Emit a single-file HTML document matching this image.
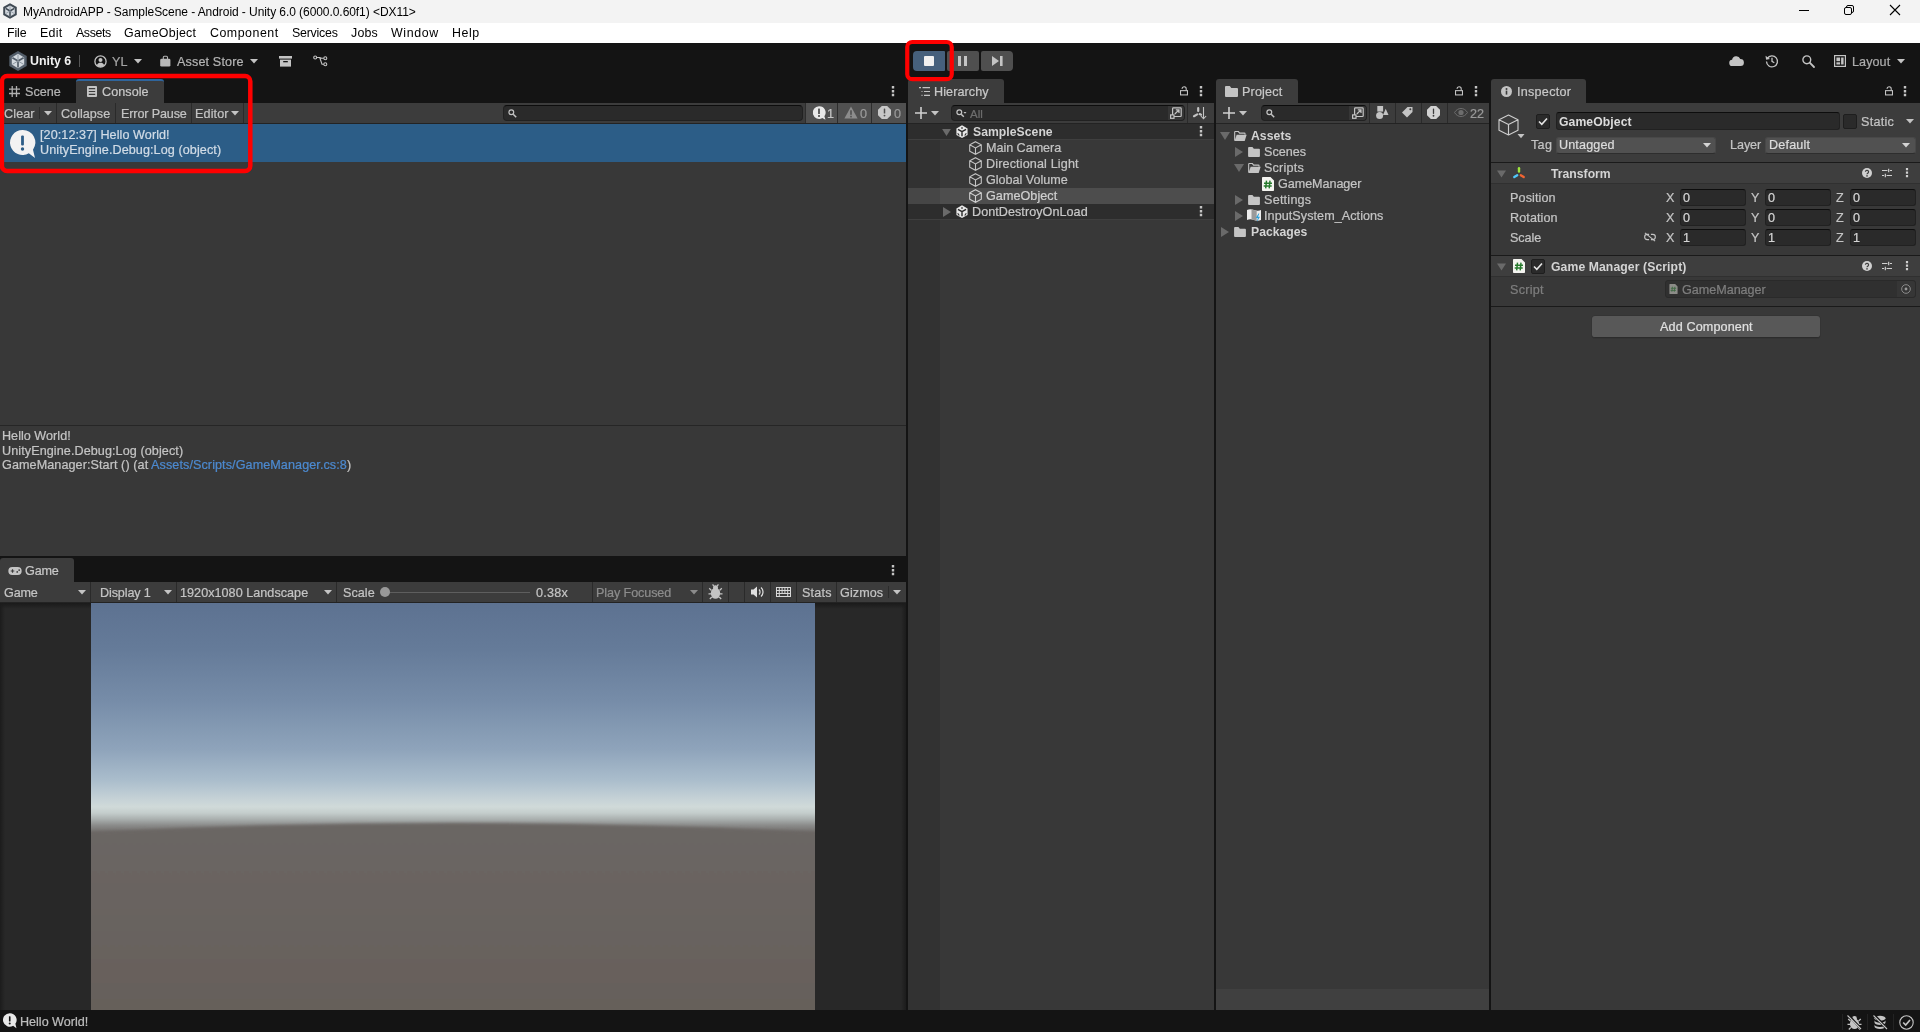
<!DOCTYPE html>
<html lang="en">
<head>
<meta charset="utf-8">
<title>MyAndroidAPP - SampleScene - Android - Unity 6.0</title>
<style>
*{box-sizing:border-box;margin:0;padding:0}
html,body{width:1920px;height:1032px;overflow:hidden;background:#141414}
body{position:relative;font-family:"Liberation Sans",sans-serif;font-size:12.6px;color:#c4c4c4;line-height:16px;-webkit-font-smoothing:antialiased}
.a{position:absolute}
.t{position:absolute;white-space:nowrap;line-height:16px;height:16px;margin-top:1px;-webkit-text-stroke:.22px}
svg{position:absolute;overflow:visible}
/* windows chrome */
#titlebar{left:0;top:0;width:1920px;height:23px;background:#f3f3f3}
#menubar{left:0;top:23px;width:1920px;height:20px;background:#fff}
.mi{color:#000;font-size:12.4px;top:24px;-webkit-text-stroke:0}
/* unity */
#apptb{left:0;top:43px;width:1920px;height:36px;background:#141414}
.panel{background:#383838}
.tb{background:#3c3c3c}
.tab{background:#3c3c3c;border-radius:3px 3px 0 0}
.sep{background:#232323}
.fld{background:#2a2a2a;border:1px solid #212121;border-top-color:#0d0d0d;border-radius:3px}
.dd{background:#515151;border:1px solid #484848;border-bottom-color:#2e2e2e;border-radius:3px}
.btnsep{background:#2a2a2a;width:1px}
.b{font-weight:bold;-webkit-text-stroke:0}
#ttl{-webkit-text-stroke:0}
.dim{color:#8a8a8a}
#ttl{letter-spacing:-0.064px}
#unity6{letter-spacing:-0.016px}
#assetstore{letter-spacing:0.145px}
#scene{letter-spacing:-0.004px}
#consoletab{letter-spacing:0.069px}
#clear{letter-spacing:0.118px}
#collapse{letter-spacing:0.023px}
#errorpause{letter-spacing:-0.137px}
#editor{letter-spacing:0.132px}
#log1{letter-spacing:0.079px}
#log2{letter-spacing:0.089px}
#d1{letter-spacing:0.028px}
#d2{letter-spacing:0.089px}
#d3{letter-spacing:0.085px}
#gametab{letter-spacing:-0.149px}
#g_game{letter-spacing:-0.149px}
#g_disp{letter-spacing:-0.122px}
#g_res{letter-spacing:0.039px}
#g_scale{letter-spacing:0.037px}
#g_zoom{letter-spacing:0.278px}
#g_pf{letter-spacing:-0.093px}
#g_stats{letter-spacing:0.199px}
#g_giz{letter-spacing:0.085px}
#hiertab{letter-spacing:0.090px}
#h_scene{letter-spacing:0.039px}
#h_cam{letter-spacing:-0.036px}
#h_light{letter-spacing:0.140px}
#h_vol{letter-spacing:-0.017px}
#h_go{letter-spacing:0.050px}
#h_ddol{letter-spacing:0.052px}
#projtab{letter-spacing:0.157px}
#p_assets{letter-spacing:0.069px}
#p_scenes{letter-spacing:0.014px}
#p_scripts{letter-spacing:0.214px}
#p_gm{letter-spacing:-0.055px}
#p_settings{letter-spacing:0.236px}
#p_isa{letter-spacing:0.062px}
#p_pkgs{letter-spacing:0.019px}
#p_22{letter-spacing:0.092px}
#insptab{letter-spacing:0.265px}
#i_name{letter-spacing:0.089px}
#i_static{letter-spacing:0.283px}
#i_tag{letter-spacing:0.296px}
#i_untagged{letter-spacing:0.134px}
#i_layer{letter-spacing:-0.063px}
#i_default{letter-spacing:0.185px}
#i_transform{letter-spacing:0.010px}
#i_pos{letter-spacing:0.111px}
#i_rot{letter-spacing:0.097px}
#i_scl{letter-spacing:-0.063px}
#i_gm{letter-spacing:0.097px}
#i_script{letter-spacing:0.249px}
#i_gmref{letter-spacing:-0.027px}
#i_add{letter-spacing:0.128px}
#s_hw{letter-spacing:-0.013px}
#layout{letter-spacing:0.065px}
#m_file{letter-spacing:-0.130px}
#m_edit{letter-spacing:0.273px}
#m_assets{letter-spacing:-0.415px}
#m_gameobject{letter-spacing:0.269px}
#m_component{letter-spacing:0.515px}
#m_services{letter-spacing:-0.227px}
#m_jobs{letter-spacing:0.191px}
#m_window{letter-spacing:0.645px}
#m_help{letter-spacing:0.554px}

</style>
</head>
<body>
<div id="root" style="position:absolute;left:0;top:0;width:1920px;height:1032px;will-change:transform">
<!-- ===== Windows title bar ===== -->
<div class="a" id="titlebar"></div>
<div class="t" style="left:23px;top:3px;color:#000;font-size:12px" id="ttl">MyAndroidAPP - SampleScene - Android - Unity 6.0 (6000.0.60f1) &lt;DX11&gt;</div>
<!-- ===== menu bar ===== -->
<div class="a" id="menubar"></div>
<div class="t mi" id="m_file" style="left:7px">File</div>
<div class="t mi" id="m_edit" style="left:40px">Edit</div>
<div class="t mi" id="m_assets" style="left:76px">Assets</div>
<div class="t mi" id="m_gameobject" style="left:124px">GameObject</div>
<div class="t mi" id="m_component" style="left:210px">Component</div>
<div class="t mi" id="m_services" style="left:292px">Services</div>
<div class="t mi" id="m_jobs" style="left:351px">Jobs</div>
<div class="t mi" id="m_window" style="left:391px">Window</div>
<div class="t mi" id="m_help" style="left:452px">Help</div>
<!-- ===== app toolbar ===== -->
<div class="a" id="apptb"></div>
<!-- TOOLBAR -->
<!-- Unity logo -->
<svg style="left:9px;top:51px" width="18" height="20" viewBox="0 0 18 20"><path d="M9 0 17.700 5v10L9 20 .3 15V5z" fill="#535e6a"/><path d="M9 2.800 15.200 6.400v7.200L9 17.200 2.800 13.600V6.400z" fill="#d2d8de"/><path d="M9 10 3.400 6.700M9 10l5.600-3.300M9 10v6.500" stroke="#535e6a" stroke-width="1.700" fill="none"/><path d="M9 10V3.500M9 10l5.600 3.300M9 10l-5.600 3.300" stroke="#8e98a2" stroke-width="1" fill="none"/></svg>
<div class="t b" style="left:30px;top:52px;color:#f0f0f0;font-size:12.4px" id="unity6">Unity 6</div>
<div class="a" style="left:79px;top:55px;width:1px;height:12px;background:#555"></div>
<!-- account -->
<svg style="left:94px;top:55px" width="13" height="13" viewBox="0 0 13 13"><circle cx="6.500" cy="6.500" r="5.600" fill="none" stroke="#c4c4c4" stroke-width="1.300"/><circle cx="6.500" cy="5" r="2" fill="#c4c4c4"/><path d="M2.800 10.300c.8-2 2.200-2.600 3.700-2.600s2.900.6 3.700 2.600c-1 1.100-2.300 1.700-3.700 1.700s-2.700-.6-3.700-1.700z" fill="#c4c4c4"/></svg>
<div class="t" style="left:112px;top:53px;color:#a4a4a4">YL</div>
<svg style="left:134px;top:59px" width="8" height="5" viewBox="0 0 8 5"><path d="M0 0h8L4 4.500z" fill="#c4c4c4"/></svg>
<!-- asset store -->
<svg style="left:160px;top:55px" width="11" height="12" viewBox="0 0 11 12"><path d="M3.300 4.200V2.300a1.100 1.100 0 0 1 1.100-1.100h2a1.100 1.100 0 0 1 1.100 1.100V4.200" fill="none" stroke="#b4b4b4" stroke-width="1.100"/><rect x=".2" y="3.700" width="10.200" height="7.900" rx="1.400" fill="#b8b8b8"/></svg>
<div class="t" style="left:177px;top:53px;color:#b4b4b4" id="assetstore">Asset Store</div>
<svg style="left:250px;top:59px" width="8" height="5" viewBox="0 0 8 5"><path d="M0 0h8L4 4.500z" fill="#c4c4c4"/></svg>
<!-- package manager -->
<svg style="left:279px;top:56px" width="13" height="11" viewBox="0 0 13 11"><rect x="0" y="0" width="13" height="2.600" fill="#c4c4c4"/><path d="M1 3.600h11v7H1z" fill="#c4c4c4"/><rect x="4.200" y="5" width="4.600" height="1.300" fill="#141414"/></svg>
<!-- version control -->
<svg style="left:313px;top:55px" width="15" height="12" viewBox="0 0 15 12"><g fill="none" stroke="#c4c4c4" stroke-width="1.100"><circle cx="2.200" cy="2.500" r="1.500"/><circle cx="12.300" cy="3.200" r="1.500"/><circle cx="12.300" cy="9.300" r="1.500"/><path d="M3.700 2.500h3l2 .7h2.100M6.700 2.500l2.300 6.800h1.800"/></g></svg>
<!-- play controls -->
<div class="a" style="left:913px;top:51px;width:32px;height:20px;background:#46607c;border-radius:4px 1px 1px 4px"></div>
<div class="a" style="left:924px;top:56px;width:10px;height:10px;background:#f0f0f0;border-radius:1px"></div>
<div class="a" style="left:947px;top:51px;width:32px;height:20px;background:#4f4f4f;border-radius:2px"></div>
<div class="a" style="left:958px;top:56px;width:3px;height:10px;background:#c4c4c4"></div>
<div class="a" style="left:964px;top:56px;width:3px;height:10px;background:#c4c4c4"></div>
<div class="a" style="left:981px;top:51px;width:32px;height:20px;background:#4f4f4f;border-radius:2px 4px 4px 2px"></div>
<svg style="left:992px;top:56px" width="11" height="10" viewBox="0 0 11 10"><path d="M0 0l7 5-7 5z" fill="#c4c4c4"/><rect x="8" y="0" width="2.600" height="10" fill="#c4c4c4"/></svg>
<!-- right icons -->
<svg style="left:1729px;top:56px" width="15" height="10" viewBox="0 0 15 10"><path d="M3.600 10a3.100 3.100 0 0 1-.5-6.200A4.300 4.300 0 0 1 11.300 3a3.500 3.500 0 0 1 .2 7z" fill="#c4c4c4"/></svg>
<svg style="left:1765px;top:54px" width="14" height="14" viewBox="0 0 14 14"><path d="M2.300 4.500A5.500 5.500 0 1 1 1.500 7.500" fill="none" stroke="#c4c4c4" stroke-width="1.300"/><path d="M.5 1.800l.6 4 3.900-.9z" fill="#c4c4c4"/><path d="M7 3.800v3.500l2.300 1.400" fill="none" stroke="#c4c4c4" stroke-width="1.300"/></svg>
<svg style="left:1802px;top:55px" width="13" height="13" viewBox="0 0 13 13"><circle cx="4.800" cy="4.800" r="3.900" fill="none" stroke="#c4c4c4" stroke-width="1.400"/><path d="M7.700 7.700l4.300 4.300" stroke="#c4c4c4" stroke-width="1.800" stroke-linecap="round"/></svg>
<svg style="left:1834px;top:55px" width="12" height="12" viewBox="0 0 12 12"><rect x=".6" y=".6" width="10.800" height="10.800" fill="none" stroke="#c4c4c4" stroke-width="1.200"/><rect x="2.400" y="2.500" width="3.700" height="3.700" fill="#c4c4c4"/><rect x="2.400" y="7.300" width="3.700" height="2.200" fill="#c4c4c4"/><rect x="7.100" y="2.500" width="2.500" height="7" fill="#c4c4c4"/></svg>
<div class="t" style="left:1852px;top:53px;color:#acacac" id="layout">Layout</div>
<svg style="left:1897px;top:59px" width="8" height="5" viewBox="0 0 8 5"><path d="M0 0h8L4 4.500z" fill="#c4c4c4"/></svg>
<!-- window controls -->
<div class="a" style="left:1799px;top:10px;width:10px;height:1px;background:#000"></div>
<svg style="left:1844px;top:5px" width="10" height="10" viewBox="0 0 10 10"><rect x=".5" y="2.500" width="7" height="7" rx="1.500" fill="none" stroke="#000" stroke-width="1"/><path d="M2.500 2.500V2A1.500 1.500 0 0 1 4 .5h4A1.500 1.500 0 0 1 9.500 2v4A1.500 1.500 0 0 1 8 7.500h-.5" fill="none" stroke="#000" stroke-width="1"/></svg>
<svg style="left:1890px;top:5px" width="10" height="10" viewBox="0 0 10 10"><path d="M0 0l10 10M10 0L0 10" stroke="#000" stroke-width="1.100"/></svg>
<!-- title icon -->
<svg style="left:3px;top:3px" width="14" height="16" viewBox="0 0 18 20"><path d="M9 0 17.700 5v10L9 20 .3 15V5z" fill="#3f4953"/><path d="M9 2.800 15.200 6.400v7.200L9 17.200 2.800 13.600V6.400z" fill="#d5dae0"/><path d="M9 10 3.400 6.700M9 10l5.600-3.300M9 10v6.500" stroke="#3f4953" stroke-width="1.900" fill="none"/><path d="M9 10V3.500M9 10l5.600 3.300M9 10l-5.600 3.300" stroke="#8a949e" stroke-width="1" fill="none"/></svg>

<!-- CONSOLE -->
<!-- tab strip -->
<svg style="left:9px;top:86px" width="11" height="11" viewBox="0 0 11 11"><path d="M3.200 0v11M7.500 0v11M0 3.200h11M0 7.500h11" stroke="#b0b0b0" stroke-width="1.300"/></svg>
<div class="t" style="left:25px;top:83px;color:#b4b4b4" id="scene">Scene</div>
<div class="a tab" style="left:76px;top:79px;width:88px;height:24px;border-top:2px solid #2f659c"></div>
<svg style="left:87px;top:86px" width="10" height="11" viewBox="0 0 10 11"><rect x="0" y="0" width="10" height="11" rx="1" fill="#c4c4c4"/><path d="M1.800 2.700h6.400M1.800 5.500h6.400M1.800 8.300h6.400" stroke="#3c3c3c" stroke-width="1.200"/></svg>
<div class="t" style="left:102px;top:83px;color:#c8c8c8" id="consoletab">Console</div>
<svg style="left:891px;top:86px" width="4" height="11" viewBox="0 0 4 11"><path d="M.8 .1h2.400v2.500H.8zM.8 3.900h2.400v2.500H.8zM.8 7.700h2.400v2.500H.8z" fill="#c4c4c4"/></svg>
<!-- console toolbar -->
<div class="a tb" style="left:0;top:103px;width:906px;height:21px;border-bottom:1px solid #232323"></div>
<div class="t" style="left:4px;top:105px" id="clear">Clear</div>
<div class="a btnsep" style="left:39px;top:107px;height:12px;background:#2c2c2c"></div>
<svg style="left:44px;top:111px" width="8" height="5" viewBox="0 0 8 5"><path d="M0 0h8L4 4.500z" fill="#c4c4c4"/></svg>
<div class="a btnsep" style="left:56px;top:103px;height:20px"></div>
<div class="t" style="left:61px;top:105px" id="collapse">Collapse</div>
<div class="a btnsep" style="left:115px;top:103px;height:20px"></div>
<div class="t" style="left:121px;top:105px" id="errorpause">Error Pause</div>
<div class="a btnsep" style="left:191px;top:103px;height:20px"></div>
<div class="t" style="left:195px;top:105px" id="editor">Editor</div>
<svg style="left:231px;top:111px" width="8" height="5" viewBox="0 0 8 5"><path d="M0 0h8L4 4.500z" fill="#c4c4c4"/></svg>
<div class="a btnsep" style="left:243px;top:103px;height:20px"></div>
<!-- search -->
<div class="a fld" style="left:503px;top:105px;width:300px;height:16px;border-radius:4px"></div>
<svg style="left:508px;top:109px" width="9" height="9" viewBox="0 0 9 9"><circle cx="3.300" cy="3.300" r="2.400" fill="none" stroke="#c4c4c4" stroke-width="1.200"/><path d="M5.200 5.200l3 3" stroke="#c4c4c4" stroke-width="1.500"/></svg>
<!-- counters -->
<div class="a" style="left:805px;top:103px;width:101px;height:20px;background:#2d2d2d"></div>
<div class="a" style="left:806px;top:103px;width:31px;height:20px;background:#505050"></div>
<div class="a" style="left:838px;top:103px;width:33px;height:20px;background:#505050"></div>
<div class="a" style="left:872px;top:103px;width:34px;height:20px;background:#505050"></div>
<svg style="left:812px;top:106px" width="14" height="14" viewBox="0 0 14 14"><path d="M7 .3a6.300 6.300 0 1 0 3.300 11.700l3.200 1.700-1.100-3.400A6.300 6.300 0 0 0 7 .3z" fill="#e8e8e8"/><rect x="6.200" y="2.600" width="1.600" height="5.400" rx=".5" fill="#3c3c3c"/><circle cx="7" cy="9.900" r="1" fill="#3c3c3c"/></svg>
<div class="t" style="left:827px;top:105px;color:#c4c4c4">1</div>
<svg style="left:844px;top:106px" width="14" height="13" viewBox="0 0 14 13"><path d="M7 .5 13.600 12.500H.4z" fill="#8c8c8c"/><rect x="6.200" y="4.300" width="1.600" height="4.500" fill="#505050"/><rect x="6.200" y="9.800" width="1.600" height="1.600" fill="#505050"/></svg>
<div class="t" style="left:860px;top:105px;color:#9a9a9a">0</div>
<svg style="left:878px;top:106px" width="13" height="13" viewBox="0 0 14 14"><path d="M4.100 0h5.800L14 4.100v5.800L9.900 14H4.100L0 9.900V4.100z" fill="#c8c8c8"/><rect x="6.200" y="2.600" width="1.600" height="5.600" rx=".5" fill="#505050"/><circle cx="7" cy="10.300" r="1" fill="#505050"/></svg>
<div class="t" style="left:894px;top:105px;color:#9a9a9a">0</div>
<!-- console body -->
<div class="a panel" style="left:0;top:124px;width:906px;height:432px"></div>
<div class="a" style="left:0;top:124px;width:906px;height:38px;background:#2c5d87"></div>
<svg style="left:10px;top:130px" width="26" height="29" viewBox="0 0 26 29"><path d="M12.500 0a12.500 12.500 0 1 0 6.300 23.300l6.200 4.700-2-8.300A12.500 12.500 0 0 0 12.500 0z" fill="#f2f2f2"/><rect x="11.100" y="5.500" width="2.800" height="10" rx="1" fill="#2c5d87"/><circle cx="12.500" cy="19" r="1.700" fill="#2c5d87"/></svg>
<div class="t" style="left:40px;top:126px;color:#d2dce6" id="log1">[20:12:37] Hello World!</div>
<div class="t" style="left:40px;top:141px;color:#d2dce6" id="log2">UnityEngine.Debug:Log (object)</div>
<div class="a" style="left:0;top:425px;width:906px;height:1px;background:#262626"></div>
<div class="t" style="left:2px;top:427px" id="d1">Hello World!</div>
<div class="t" style="left:2px;top:442px" id="d2">UnityEngine.Debug:Log (object)</div>
<div class="t" style="left:2px;top:456px" id="d3">GameManager:Start () (at <span style="color:#4c8ad0">Assets/Scripts/GameManager.cs:8</span>)</div>

<!-- GAME -->
<!-- game tab -->
<div class="a tab" style="left:0;top:558px;width:74px;height:24px"></div>
<svg style="left:8px;top:567px" width="14" height="8" viewBox="0 0 15 9"><rect x="0" y="0" width="15" height="9" rx="4.500" fill="#c4c4c4"/><path d="M2.700 4.500h4M4.700 2.500v4" stroke="#3c3c3c" stroke-width="1.300"/><circle cx="10" cy="5.600" r="1" fill="#3c3c3c"/><circle cx="12.200" cy="3.500" r="1" fill="#3c3c3c"/></svg>
<div class="t" style="left:25px;top:562px;color:#c8c8c8" id="gametab">Game</div>
<svg style="left:891px;top:565px" width="4" height="11" viewBox="0 0 4 11"><path d="M.8 .1h2.400v2.500H.8zM.8 3.900h2.400v2.500H.8zM.8 7.700h2.400v2.500H.8z" fill="#c4c4c4"/></svg>
<!-- game toolbar -->
<div class="a tb" style="left:0;top:582px;width:906px;height:21px;border-bottom:1px solid #232323"></div>
<div class="t" style="left:4px;top:584px" id="g_game">Game</div>
<svg style="left:78px;top:590px" width="8" height="5" viewBox="0 0 8 5"><path d="M0 0h8L4 4.500z" fill="#c4c4c4"/></svg>
<div class="a btnsep" style="left:90px;top:582px;height:20px"></div>
<div class="t" style="left:100px;top:584px" id="g_disp">Display 1</div>
<svg style="left:164px;top:590px" width="8" height="5" viewBox="0 0 8 5"><path d="M0 0h8L4 4.500z" fill="#c4c4c4"/></svg>
<div class="a btnsep" style="left:176px;top:582px;height:20px"></div>
<div class="t" style="left:180px;top:584px" id="g_res">1920x1080 Landscape</div>
<svg style="left:324px;top:590px" width="8" height="5" viewBox="0 0 8 5"><path d="M0 0h8L4 4.500z" fill="#c4c4c4"/></svg>
<div class="a btnsep" style="left:336px;top:582px;height:20px"></div>
<div class="t" style="left:343px;top:584px" id="g_scale">Scale</div>
<div class="a" style="left:385px;top:592px;width:145px;height:1px;background:#5e5e5e"></div>
<div class="a" style="left:380px;top:587px;width:10px;height:10px;border-radius:5px;background:#999"></div>
<div class="t" style="left:536px;top:584px" id="g_zoom">0.38x</div>
<div class="a btnsep" style="left:592px;top:582px;height:20px"></div>
<div class="t dim" style="left:596px;top:584px;color:#8c8c8c" id="g_pf">Play Focused</div>
<svg style="left:690px;top:590px" width="8" height="5" viewBox="0 0 8 5"><path d="M0 0h8L4 4.500z" fill="#8c8c8c"/></svg>
<div class="a btnsep" style="left:702px;top:582px;height:20px"></div>
<svg style="left:708px;top:584px" width="15" height="16" viewBox="0 0 15 16"><ellipse cx="7.500" cy="9.300" rx="4.700" ry="5.500" fill="#c4c4c4"/><circle cx="7.500" cy="3.800" r="2.500" fill="#c4c4c4"/><path d="M3.500 6.500 1.200 4.300M11.500 6.500l2.300-2.200M3 9.800H.5M12 9.800h2.500M3.800 13l-2 2M11.200 13l2 2M5.800 2 4.600 .4M9.200 2 10.400 .4" stroke="#c4c4c4" stroke-width="1.250" fill="none"/></svg>
<div class="a btnsep" style="left:728px;top:582px;height:20px"></div>
<div class="a btnsep" style="left:744px;top:582px;height:20px"></div>
<svg style="left:751px;top:586px" width="13" height="12" viewBox="0 0 13 12"><path d="M0 3.500h2.500L6 .5v11L2.500 8.500H0z" fill="#e0e0e0"/><path d="M8 3.500a3.500 3.500 0 0 1 0 5M10 1.500a6 6 0 0 1 0 9" fill="none" stroke="#e0e0e0" stroke-width="1.200"/></svg>
<div class="a btnsep" style="left:770px;top:582px;height:20px"></div>
<svg style="left:776px;top:587px" width="15" height="10" viewBox="0 0 15 10"><rect x=".5" y=".5" width="14" height="9" fill="none" stroke="#d8d8d8" stroke-width="1"/><path d="M.5 3.500h14M.5 6.500h14M3.300 .5v9M6.100 .5v6M8.900 .5v6M11.700 .5v9" stroke="#d8d8d8" stroke-width="1" fill="none"/></svg>
<div class="a btnsep" style="left:796px;top:582px;height:20px"></div>
<div class="t" style="left:802px;top:584px" id="g_stats">Stats</div>
<div class="a btnsep" style="left:836px;top:582px;height:20px"></div>
<div class="t" style="left:840px;top:584px" id="g_giz">Gizmos</div>
<div class="a btnsep" style="left:888px;top:586px;height:12px;background:#2c2c2c"></div>
<svg style="left:893px;top:590px" width="8" height="5" viewBox="0 0 8 5"><path d="M0 0h8L4 4.500z" fill="#c4c4c4"/></svg>
<!-- game view -->
<div class="a" style="left:0;top:603px;width:906px;height:407px;background:#282828"></div>
<div class="a" style="left:0;top:603px;width:906px;height:6px;background:linear-gradient(to bottom,#1a1a1a,#282828)"></div>
<div class="a" style="left:0;top:603px;width:5px;height:407px;background:linear-gradient(to right,#1c1c1c,rgba(40,40,40,0))"></div>
<div class="a" style="left:901px;top:603px;width:5px;height:407px;background:linear-gradient(to left,#1c1c1c,rgba(40,40,40,0))"></div>
<svg style="left:91px;top:603px" width="724" height="407" viewBox="0 0 724 407">
<defs>
<linearGradient id="sky" x1="0" y1="0" x2="0" y2="1">
<stop offset="0" stop-color="#5d7291"/>
<stop offset=".115" stop-color="#657b99"/>
<stop offset=".238" stop-color="#768ca8"/>
<stop offset=".361" stop-color="#8fa4bb"/>
<stop offset=".435" stop-color="#aabdcc"/>
<stop offset=".484" stop-color="#c7d3d7"/>
<stop offset=".501" stop-color="#d0dad9"/>
<stop offset=".516" stop-color="#c4cdcc"/>
<stop offset=".531" stop-color="#aab0af"/>
<stop offset=".546" stop-color="#8b8c8b"/>
<stop offset=".565" stop-color="#6e6a68"/>
<stop offset=".580" stop-color="#6b6664"/>
<stop offset="1" stop-color="#6b6664"/>
</linearGradient>
<linearGradient id="gnd" x1="0" y1="0" x2="0" y2="1">
<stop offset="0" stop-color="#6b6664"/>
<stop offset="1" stop-color="#655f59"/>
</linearGradient>
<filter id="bl" x="-5%" y="-5%" width="110%" height="110%"><feGaussianBlur stdDeviation="1.600"/></filter>
<clipPath id="gv"><rect x="0" y="0" width="724" height="407"/></clipPath>
</defs>
<rect x="0" y="0" width="724" height="407" fill="url(#sky)"/>
<g clip-path="url(#gv)"><path d="M-10 229.500Q362 210.500 734 229.500V420H-10z" fill="url(#gnd)" filter="url(#bl)"/></g>
</svg>

<!-- HIERARCHY -->
<!-- hierarchy tab -->
<div class="a tab" style="left:908px;top:79px;width:96px;height:24px"></div>
<svg style="left:919px;top:87px" width="11" height="9" viewBox="0 0 11 9"><path d="M0 .6h2M3.500 .6H11M2.500 4.500h1M5 4.500h6M2.500 8.400h1M5 8.400h6" stroke="#c4c4c4" stroke-width="1.200"/></svg>
<div class="t" style="left:934px;top:83px;color:#c8c8c8" id="hiertab">Hierarchy</div>
<svg style="left:1180px;top:86px" width="8" height="10" viewBox="0 0 9 10"><rect x=".6" y="4.600" width="7.800" height="4.800" fill="none" stroke="#c4c4c4" stroke-width="1.200"/><path d="M7 4.500V2.800A2.400 2.400 0 0 0 2.200 2.600" fill="none" stroke="#c4c4c4" stroke-width="1.200"/></svg>
<svg style="left:1199px;top:86px" width="4" height="11" viewBox="0 0 4 11"><path d="M.8 .1h2.400v2.500H.8zM.8 3.900h2.400v2.500H.8zM.8 7.700h2.400v2.500H.8z" fill="#c4c4c4"/></svg>
<!-- toolbar -->
<div class="a tb" style="left:908px;top:103px;width:306px;height:21px;border-bottom:1px solid #232323"></div>
<svg style="left:915px;top:107px" width="12" height="12" viewBox="0 0 12 12"><path d="M6 0v12M0 6h12" stroke="#d0d0d0" stroke-width="1.600"/></svg>
<svg style="left:931px;top:111px" width="8" height="5" viewBox="0 0 8 5"><path d="M0 0h8L4 4.500z" fill="#c4c4c4"/></svg>
<div class="a fld" style="left:951px;top:105px;width:234px;height:16px;border-radius:4px"></div>
<svg style="left:956px;top:109px" width="11" height="9" viewBox="0 0 11 9"><circle cx="3.300" cy="3.300" r="2.400" fill="none" stroke="#c4c4c4" stroke-width="1.200"/><path d="M5.200 5.200l2.600 2.600" stroke="#c4c4c4" stroke-width="1.500"/><path d="M7.500 3h3l-1.500 1.800z" fill="#c4c4c4"/></svg>
<div class="t" style="left:970px;top:105px;color:#6e6e6e;font-size:11.500px">All</div>
<div class="a" style="left:1168px;top:106px;width:16px;height:14px;background:#363636;border-radius:0 3px 3px 0"></div>
<svg style="left:1170px;top:107px" width="12" height="12" viewBox="0 0 12 12"><rect x="2.600" y=".9" width="8.600" height="8.600" rx=".8" fill="none" stroke="#c4c4c4" stroke-width="1.200"/><rect x=".6" y="7.900" width="3.400" height="3.400" fill="#363636" stroke="#c4c4c4" stroke-width="1.200"/><path d="M4.800 7 9 2.800M5.800 2.800H9V6" fill="none" stroke="#c4c4c4" stroke-width="1.200"/></svg>
<div class="a btnsep" style="left:1187px;top:103px;height:20px"></div>
<svg style="left:1192px;top:106px" width="15" height="14" viewBox="0 0 15 14"><path d="M6.200 2.200V5M2 10.200 5.200 8.400M7.700 8.100 9 8.700" fill="none" stroke="#c4c4c4" stroke-width="2.200" stroke-linecap="round"/><path d="M11.500 1V12.600M8.900 10l2.600 2.800L14.100 10" fill="none" stroke="#c4c4c4" stroke-width="1.100"/></svg>
<!-- body -->
<div class="a panel" style="left:908px;top:124px;width:306px;height:886px"></div>
<div class="a" style="left:908px;top:124px;width:32px;height:886px;background:#323232"></div>
<div class="a" style="left:908px;top:124px;width:306px;height:16px;background:#2d2d2d"></div>
<div class="a" style="left:908px;top:188px;width:306px;height:16px;background:#4d4d4d"></div>
<div class="a" style="left:908px;top:188px;width:32px;height:16px;background:#464646"></div>
<div class="a" style="left:908px;top:204px;width:306px;height:16px;background:#2d2d2d"></div>
<div class="a" style="left:908px;top:139px;width:306px;height:1px;background:#3f3f3f"></div>
<div class="a" style="left:908px;top:219px;width:306px;height:1px;background:#3f3f3f"></div>
<!-- rows -->
<svg style="left:942px;top:129px" width="9" height="7" viewBox="0 0 10 8"><path d="M0 0h10L5 8z" fill="#6a6a6a"/></svg>
<svg style="left:956px;top:125px" width="12" height="13" viewBox="0 0 14 15"><path d="M7 .3 13.500 4v7.500L7 15 .5 11.500V4z" fill="#e8e8e8"/><path d="M7 7.600 2.300 4.900M7 7.600l4.700-2.700M7 7.600V13" stroke="#2d2d2d" stroke-width="1.700" fill="none"/><path d="M7 2.200v2.300M3.800 12.200 2 9.500M10.200 12.200 12 9.500" stroke="#2d2d2d" stroke-width="1.300"/></svg>
<div class="t b" style="left:973px;top:123px;color:#d4d4d4;font-size:12.200px" id="h_scene">SampleScene</div>
<svg style="left:1199px;top:126px" width="4" height="11" viewBox="0 0 4 11"><path d="M.8 .1h2.400v2.500H.8zM.8 3.900h2.400v2.500H.8zM.8 7.700h2.400v2.500H.8z" fill="#c4c4c4"/></svg>
<svg style="left:969px;top:141px" width="13" height="14" viewBox="0 0 13 14"><path d="M6.500 .7 12.300 3.800v6.400L6.500 13.300.7 10.200V3.800zM.7 3.800l5.800 3.100 5.800-3.100M6.500 6.900v6.400" fill="none" stroke="#c4c4c4" stroke-width="1.100"/></svg>
<div class="t" style="left:986px;top:139px" id="h_cam">Main Camera</div>
<svg style="left:969px;top:157px" width="13" height="14" viewBox="0 0 13 14"><path d="M6.500 .7 12.300 3.800v6.400L6.500 13.300.7 10.200V3.800zM.7 3.800l5.800 3.100 5.800-3.100M6.500 6.900v6.400" fill="none" stroke="#c4c4c4" stroke-width="1.100"/></svg>
<div class="t" style="left:986px;top:155px" id="h_light">Directional Light</div>
<svg style="left:969px;top:173px" width="13" height="14" viewBox="0 0 13 14"><path d="M6.500 .7 12.300 3.800v6.400L6.500 13.300.7 10.200V3.800zM.7 3.800l5.800 3.100 5.800-3.100M6.500 6.900v6.400" fill="none" stroke="#c4c4c4" stroke-width="1.100"/></svg>
<div class="t" style="left:986px;top:171px" id="h_vol">Global Volume</div>
<svg style="left:969px;top:189px" width="13" height="14" viewBox="0 0 13 14"><path d="M6.500 .7 12.300 3.800v6.400L6.500 13.300.7 10.200V3.800zM.7 3.800l5.800 3.100 5.800-3.100M6.500 6.900v6.400" fill="none" stroke="#d0d0d0" stroke-width="1.100"/></svg>
<div class="t" style="left:986px;top:187px;color:#d0d0d0" id="h_go">GameObject</div>
<svg style="left:943px;top:207px" width="8" height="10" viewBox="0 0 8 10"><path d="M0 0v10l8-5z" fill="#6a6a6a"/></svg>
<svg style="left:956px;top:205px" width="12" height="13" viewBox="0 0 14 15"><path d="M7 .3 13.500 4v7.500L7 15 .5 11.500V4z" fill="#e8e8e8"/><path d="M7 7.600 2.300 4.900M7 7.600l4.700-2.700M7 7.600V13" stroke="#2d2d2d" stroke-width="1.700" fill="none"/><path d="M7 2.200v2.300M3.800 12.200 2 9.500M10.200 12.200 12 9.500" stroke="#2d2d2d" stroke-width="1.300"/></svg>
<div class="t" style="left:972px;top:203px;color:#c8c8c8" id="h_ddol">DontDestroyOnLoad</div>
<svg style="left:1199px;top:206px" width="4" height="11" viewBox="0 0 4 11"><path d="M.8 .1h2.400v2.500H.8zM.8 3.900h2.400v2.500H.8zM.8 7.700h2.400v2.500H.8z" fill="#c4c4c4"/></svg>

<!-- PROJECT -->
<!-- project tab -->
<div class="a tab" style="left:1216px;top:79px;width:82px;height:24px"></div>
<svg style="left:1225px;top:86px" width="13" height="11" viewBox="0 0 13 11"><path d="M0 1a1 1 0 0 1 1-1h3.800l1.500 2H12a1 1 0 0 1 1 1v7a1 1 0 0 1-1 1H1a1 1 0 0 1-1-1z" fill="#c4c4c4"/></svg>
<div class="t" style="left:1242px;top:83px;color:#c8c8c8" id="projtab">Project</div>
<svg style="left:1455px;top:86px" width="8" height="10" viewBox="0 0 9 10"><rect x=".6" y="4.600" width="7.800" height="4.800" fill="none" stroke="#c4c4c4" stroke-width="1.200"/><path d="M7 4.500V2.800A2.400 2.400 0 0 0 2.200 2.600" fill="none" stroke="#c4c4c4" stroke-width="1.200"/></svg>
<svg style="left:1474px;top:86px" width="4" height="11" viewBox="0 0 4 11"><path d="M.8 .1h2.400v2.500H.8zM.8 3.900h2.400v2.500H.8zM.8 7.700h2.400v2.500H.8z" fill="#c4c4c4"/></svg>
<!-- toolbar -->
<div class="a tb" style="left:1216px;top:103px;width:273px;height:21px;border-bottom:1px solid #232323"></div>
<svg style="left:1223px;top:107px" width="12" height="12" viewBox="0 0 12 12"><path d="M6 0v12M0 6h12" stroke="#d0d0d0" stroke-width="1.600"/></svg>
<svg style="left:1239px;top:111px" width="8" height="5" viewBox="0 0 8 5"><path d="M0 0h8L4 4.500z" fill="#c4c4c4"/></svg>
<div class="a fld" style="left:1261px;top:105px;width:106px;height:16px;border-radius:4px"></div>
<svg style="left:1266px;top:109px" width="9" height="9" viewBox="0 0 9 9"><circle cx="3.300" cy="3.300" r="2.400" fill="none" stroke="#c4c4c4" stroke-width="1.200"/><path d="M5.200 5.200l3 3" stroke="#c4c4c4" stroke-width="1.500"/></svg>
<div class="a" style="left:1349px;top:106px;width:17px;height:14px;background:#363636;border-radius:0 3px 3px 0"></div>
<svg style="left:1352px;top:107px" width="12" height="12" viewBox="0 0 12 12"><rect x="2.600" y=".9" width="8.600" height="8.600" rx=".8" fill="none" stroke="#c4c4c4" stroke-width="1.200"/><rect x=".6" y="7.900" width="3.400" height="3.400" fill="#363636" stroke="#c4c4c4" stroke-width="1.200"/><path d="M4.800 7 9 2.800M5.800 2.800H9V6" fill="none" stroke="#c4c4c4" stroke-width="1.200"/></svg>
<div class="a btnsep" style="left:1369px;top:103px;height:20px"></div>
<svg style="left:1376px;top:106px" width="13" height="13" viewBox="0 0 13 13"><rect x="1.300" y="0" width="5.800" height="5.600" fill="#c4c4c4"/><circle cx="3.600" cy="9.500" r="3.500" fill="#c4c4c4"/><path d="M9.700 2.700 12.500 9H7z" fill="#c4c4c4"/></svg>
<div class="a btnsep" style="left:1395px;top:103px;height:20px"></div>
<svg style="left:1402px;top:107px" width="11" height="11" viewBox="0 0 11 11"><path d="M5.500 0H10.500V5L5 10.500 0 5.500z" fill="#c4c4c4"/><circle cx="8.300" cy="2.300" r="1" fill="#3c3c3c"/></svg>
<div class="a btnsep" style="left:1421px;top:103px;height:20px"></div>
<svg style="left:1427px;top:106px" width="13" height="13" viewBox="0 0 14 14"><path d="M4.100 0h5.800L14 4.100v5.800L9.900 14H4.100L0 9.900V4.100z" fill="#d2d2d2"/><rect x="6.300" y="2.700" width="1.400" height="5.800" rx=".5" fill="#3c3c3c"/><circle cx="7" cy="10.500" r=".95" fill="#3c3c3c"/></svg>
<div class="a btnsep" style="left:1447px;top:103px;height:20px"></div>
<svg style="left:1454px;top:108px" width="14" height="9" viewBox="0 0 14 9"><path d="M.5 4.500C2.500 1.500 4.500.5 7 .5s4.500 1 6.500 4C11.500 7.500 9.500 8.500 7 8.500s-4.500-1-6.500-4z" fill="none" stroke="#6e6e6e" stroke-width="1"/><circle cx="7" cy="4.500" r="2.600" fill="#6e6e6e"/></svg>
<div class="t" style="left:1470px;top:105px;color:#9a9a9a;font-size:12.600px" id="p_22">22</div>
<!-- body -->
<div class="a panel" style="left:1216px;top:124px;width:273px;height:886px"></div>
<div class="a" style="left:1216px;top:989px;width:273px;height:21px;background:#404040"></div>
<!-- rows -->
<svg style="left:1220px;top:132px" width="10" height="8" viewBox="0 0 10 8"><path d="M0 0h10L5 8z" fill="#6a6a6a"/></svg>
<svg style="left:1234px;top:131px" width="13" height="10" viewBox="0 0 14 11"><path d="M.6 10.400V1.300a.7 .7 0 0 1 .7-.7h3.400l1.300 1.700h5.300a.7 .7 0 0 1 .7 .7v1.200" fill="none" stroke="#c4c4c4" stroke-width="1.200"/><path d="M2.800 4.200h11L11.600 11H.4z" fill="#c4c4c4"/></svg>
<div class="t b" style="left:1251px;top:127px;color:#d4d4d4;font-size:12.200px" id="p_assets">Assets</div>
<svg style="left:1235px;top:147px" width="8" height="10" viewBox="0 0 8 10"><path d="M0 0v10l8-5z" fill="#6a6a6a"/></svg>
<svg style="left:1248px;top:147px" width="12" height="10" viewBox="0 0 13 11"><path d="M0 1a1 1 0 0 1 1-1h3.800l1.500 2H12a1 1 0 0 1 1 1v7a1 1 0 0 1-1 1H1a1 1 0 0 1-1-1z" fill="#c4c4c4"/></svg>
<div class="t" style="left:1264px;top:143px" id="p_scenes">Scenes</div>
<svg style="left:1234px;top:164px" width="10" height="8" viewBox="0 0 10 8"><path d="M0 0h10L5 8z" fill="#6a6a6a"/></svg>
<svg style="left:1248px;top:163px" width="13" height="10" viewBox="0 0 14 11"><path d="M.6 10.400V1.300a.7 .7 0 0 1 .7-.7h3.400l1.300 1.700h5.300a.7 .7 0 0 1 .7 .7v1.200" fill="none" stroke="#c4c4c4" stroke-width="1.200"/><path d="M2.800 4.200h11L11.600 11H.4z" fill="#c4c4c4"/></svg>
<div class="t" style="left:1264px;top:159px" id="p_scripts">Scripts</div>
<svg style="left:1262px;top:177px" width="12" height="14" viewBox="0 0 12 14"><path d="M0 .8A.8 .8 0 0 1 .8 0H8.500L12 3.500V13.200a.8 .8 0 0 1-.8 .8H.8a.8 .8 0 0 1-.8-.8z" fill="#f4f4f0"/><path d="M4.500 3.600 3.700 11.400M8 3.600 7.200 11.400M2 6.200h8M1.700 9h8" stroke="#267a2c" stroke-width="1.450" fill="none"/></svg>
<div class="t" style="left:1278px;top:175px" id="p_gm">GameManager</div>
<svg style="left:1235px;top:195px" width="8" height="10" viewBox="0 0 8 10"><path d="M0 0v10l8-5z" fill="#6a6a6a"/></svg>
<svg style="left:1248px;top:195px" width="12" height="10" viewBox="0 0 13 11"><path d="M0 1a1 1 0 0 1 1-1h3.800l1.500 2H12a1 1 0 0 1 1 1v7a1 1 0 0 1-1 1H1a1 1 0 0 1-1-1z" fill="#c4c4c4"/></svg>
<div class="t" style="left:1264px;top:191px" id="p_settings">Settings</div>
<svg style="left:1235px;top:211px" width="8" height="10" viewBox="0 0 8 10"><path d="M0 0v10l8-5z" fill="#6a6a6a"/></svg>
<svg style="left:1247px;top:209px" width="14" height="13" viewBox="0 0 14 13"><path d="M0 1C2 0 4.500 0 7 1s5 1 7 0v10c-2 1-4.500 1-7 0s-5-1-7 0z" fill="#ececec"/><path d="M4.500 .4C5.500 .5 6.200 .7 7 1s1.700 .6 2.700 .7v10C8.700 11.600 7.800 11.300 7 11s-1.500-.5-2.500-.6z" fill="#9a9a9a"/><path d="M11.500 4.500 8.800 9h2l-1 4 3.200-5.200h-2l1.300-3.300z" fill="#2a9fd8"/></svg>
<div class="t" style="left:1264px;top:207px" id="p_isa">InputSystem_Actions</div>
<svg style="left:1221px;top:227px" width="8" height="10" viewBox="0 0 8 10"><path d="M0 0v10l8-5z" fill="#6a6a6a"/></svg>
<svg style="left:1234px;top:227px" width="12" height="10" viewBox="0 0 13 11"><path d="M0 1a1 1 0 0 1 1-1h3.800l1.500 2H12a1 1 0 0 1 1 1v7a1 1 0 0 1-1 1H1a1 1 0 0 1-1-1z" fill="#c4c4c4"/></svg>
<div class="t b" style="left:1251px;top:223px;color:#d4d4d4;font-size:12.200px" id="p_pkgs">Packages</div>

<!-- INSPECTOR -->
<!-- inspector tab -->
<div class="a tab" style="left:1491px;top:79px;width:95px;height:24px"></div>
<svg style="left:1501px;top:86px" width="11" height="11" viewBox="0 0 11 11"><circle cx="5.500" cy="5.500" r="5.500" fill="#c4c4c4"/><rect x="4.700" y="4.600" width="1.600" height="4" fill="#3c3c3c"/><circle cx="5.500" cy="2.900" r="1" fill="#3c3c3c"/></svg>
<div class="t" style="left:1517px;top:83px;color:#c8c8c8" id="insptab">Inspector</div>
<svg style="left:1885px;top:86px" width="8" height="10" viewBox="0 0 9 10"><rect x=".6" y="4.600" width="7.800" height="4.800" fill="none" stroke="#c4c4c4" stroke-width="1.200"/><path d="M7 4.500V2.800A2.400 2.400 0 0 0 2.200 2.600" fill="none" stroke="#c4c4c4" stroke-width="1.200"/></svg>
<svg style="left:1903px;top:86px" width="4" height="11" viewBox="0 0 4 11"><path d="M.8 .1h2.400v2.500H.8zM.8 3.900h2.400v2.500H.8zM.8 7.700h2.400v2.500H.8z" fill="#c4c4c4"/></svg>
<!-- body -->
<div class="a" style="left:1491px;top:103px;width:429px;height:60px;background:#3c3c3c"></div>
<div class="a panel" style="left:1491px;top:163px;width:429px;height:847px"></div>
<!-- header -->
<svg style="left:1498px;top:114px" width="21" height="22" viewBox="0 0 21 22"><path d="M10.500 1 20 5.800v10.400L10.500 21 1 16.200V5.800zM1 5.800l9.500 4.800L20 5.800M10.500 10.600V21" fill="none" stroke="#cdcdcd" stroke-width="1.150" stroke-linejoin="round"/></svg>
<svg style="left:1517px;top:134px" width="8" height="5" viewBox="0 0 8 5"><path d="M.5 0h7L4 4.200z" fill="#c4c4c4"/></svg>
<div class="a" style="left:1536px;top:114px;width:14px;height:15px;background:#2a2a2a;border:1px solid #1e1e1e;border-radius:2px"></div>
<svg style="left:1538px;top:117px" width="10" height="9" viewBox="0 0 10 9"><path d="M1 4.500 3.800 7.300 9 1.500" fill="none" stroke="#e4e4e4" stroke-width="1.600"/></svg>
<div class="a fld" style="left:1556px;top:112px;width:284px;height:18px"></div>
<div class="t b" style="left:1559px;top:113px;color:#dcdcdc;font-size:12.200px" id="i_name">GameObject</div>
<div class="a" style="left:1843px;top:114px;width:14px;height:15px;background:#2a2a2a;border:1px solid #1e1e1e;border-radius:2px"></div>
<div class="t" style="left:1861px;top:113px" id="i_static">Static</div>
<svg style="left:1906px;top:119px" width="8" height="5" viewBox="0 0 8 5"><path d="M0 0h8L4 4.500z" fill="#c4c4c4"/></svg>
<div class="t" style="left:1531px;top:136px" id="i_tag">Tag</div>
<div class="a dd" style="left:1556px;top:137px;width:160px;height:17px"></div>
<div class="t" style="left:1559px;top:136px;color:#dcdcdc" id="i_untagged">Untagged</div>
<svg style="left:1703px;top:143px" width="8" height="5" viewBox="0 0 8 5"><path d="M0 0h8L4 4.500z" fill="#d4d4d4"/></svg>
<div class="t" style="left:1730px;top:136px" id="i_layer">Layer</div>
<div class="a dd" style="left:1765px;top:137px;width:151px;height:17px"></div>
<div class="t" style="left:1769px;top:136px;color:#dcdcdc" id="i_default">Default</div>
<svg style="left:1902px;top:143px" width="8" height="5" viewBox="0 0 8 5"><path d="M0 0h8L4 4.500z" fill="#d4d4d4"/></svg>
<!-- transform header -->
<div class="a" style="left:1491px;top:162px;width:429px;height:1px;background:#1a1a1a"></div>
<div class="a" style="left:1491px;top:163px;width:429px;height:20px;background:#3e3e3e"></div>
<div class="a" style="left:1491px;top:183px;width:429px;height:1px;background:#303030"></div>
<svg style="left:1497px;top:170px" width="9" height="8" viewBox="0 0 10 8"><path d="M0 0h10L5 8z" fill="#6a6a6a"/></svg>
<svg style="left:1512px;top:166px" width="14" height="13" viewBox="0 0 14 13"><path d="M7 2.300V5.600" stroke="#9fe63c" stroke-width="2.400" stroke-linecap="round"/><path d="M5.200 9.200 2.300 11" stroke="#50c8fa" stroke-width="2.400" stroke-linecap="round"/><path d="M8.800 9.200 11.700 11" stroke="#f06432" stroke-width="2.400" stroke-linecap="round"/></svg>
<div class="t b" style="left:1551px;top:165px;color:#d4d4d4;font-size:12.200px" id="i_transform">Transform</div>
<svg style="left:1862px;top:168px" width="10" height="10" viewBox="0 0 11 11"><circle cx="5.500" cy="5.500" r="5.500" fill="#d0d0d0"/><path d="M3.800 4.200a1.700 1.700 0 1 1 2.600 1.500c-.6 .4-.9 .7-.9 1.300" fill="none" stroke="#3e3e3e" stroke-width="1.400"/><circle cx="5.500" cy="8.700" r=".9" fill="#3e3e3e"/></svg>
<svg style="left:1882px;top:168px" width="10" height="10" viewBox="0 0 12 11"><path d="M0 2.500h6.500M9.500 2.500H12M8 .5v4M0 8.500h2.500M5.500 8.500H12M4 6.500v4" fill="none" stroke="#d0d0d0" stroke-width="1.400"/></svg>
<svg style="left:1905px;top:168px" width="4" height="10" viewBox="0 0 4 11"><path d="M.8 .1h2.400v2.500H.8zM.8 3.900h2.400v2.500H.8zM.8 7.700h2.400v2.500H.8z" fill="#d0d0d0"/></svg>
<!-- transform rows -->
<div class="t" style="left:1510px;top:189px" id="i_pos">Position</div>
<div class="t" style="left:1666px;top:189px">X</div><div class="a fld" style="left:1680px;top:189px;width:66px;height:17px"></div><div class="t" style="left:1683px;top:189px;color:#d4d4d4">0</div>
<div class="t" style="left:1751px;top:189px">Y</div><div class="a fld" style="left:1765px;top:189px;width:66px;height:17px"></div><div class="t" style="left:1768px;top:189px;color:#d4d4d4">0</div>
<div class="t" style="left:1836px;top:189px">Z</div><div class="a fld" style="left:1850px;top:189px;width:66px;height:17px"></div><div class="t" style="left:1853px;top:189px;color:#d4d4d4">0</div>
<div class="t" style="left:1510px;top:209px" id="i_rot">Rotation</div>
<div class="t" style="left:1666px;top:209px">X</div><div class="a fld" style="left:1680px;top:209px;width:66px;height:17px"></div><div class="t" style="left:1683px;top:209px;color:#d4d4d4">0</div>
<div class="t" style="left:1751px;top:209px">Y</div><div class="a fld" style="left:1765px;top:209px;width:66px;height:17px"></div><div class="t" style="left:1768px;top:209px;color:#d4d4d4">0</div>
<div class="t" style="left:1836px;top:209px">Z</div><div class="a fld" style="left:1850px;top:209px;width:66px;height:17px"></div><div class="t" style="left:1853px;top:209px;color:#d4d4d4">0</div>
<div class="t" style="left:1510px;top:229px" id="i_scl">Scale</div>
<svg style="left:1644px;top:232px" width="12" height="10" viewBox="0 0 13 10"><path d="M5.500 2.200H3.500a2.800 2.800 0 0 0 0 5.600h2M7.500 2.200h2a2.800 2.800 0 0 1 0 5.600h-2" fill="none" stroke="#c4c4c4" stroke-width="1.200"/><path d="M1 .5 12 9.500" stroke="#c4c4c4" stroke-width="1.200"/></svg>
<div class="t" style="left:1666px;top:229px">X</div><div class="a fld" style="left:1680px;top:229px;width:66px;height:17px"></div><div class="t" style="left:1683px;top:229px;color:#d4d4d4">1</div>
<div class="t" style="left:1751px;top:229px">Y</div><div class="a fld" style="left:1765px;top:229px;width:66px;height:17px"></div><div class="t" style="left:1768px;top:229px;color:#d4d4d4">1</div>
<div class="t" style="left:1836px;top:229px">Z</div><div class="a fld" style="left:1850px;top:229px;width:66px;height:17px"></div><div class="t" style="left:1853px;top:229px;color:#d4d4d4">1</div>
<!-- game manager header -->
<div class="a" style="left:1491px;top:255px;width:429px;height:1px;background:#1a1a1a"></div>
<div class="a" style="left:1491px;top:256px;width:429px;height:20px;background:#3e3e3e"></div>
<div class="a" style="left:1491px;top:276px;width:429px;height:1px;background:#303030"></div>
<svg style="left:1497px;top:263px" width="9" height="8" viewBox="0 0 10 8"><path d="M0 0h10L5 8z" fill="#6a6a6a"/></svg>
<svg style="left:1513px;top:259px" width="12" height="14" viewBox="0 0 12 14"><path d="M0 .8A.8 .8 0 0 1 .8 0H8.500L12 3.500V13.200a.8 .8 0 0 1-.8 .8H.8a.8 .8 0 0 1-.8-.8z" fill="#f4f4f0"/><path d="M4.500 3.600 3.700 11.400M8 3.600 7.200 11.400M2 6.200h8M1.700 9h8" stroke="#267a2c" stroke-width="1.450" fill="none"/></svg>
<div class="a" style="left:1531px;top:259px;width:14px;height:15px;background:#2a2a2a;border:1px solid #1e1e1e;border-radius:2px"></div>
<svg style="left:1533px;top:262px" width="10" height="9" viewBox="0 0 10 9"><path d="M1 4.500 3.800 7.300 9 1.500" fill="none" stroke="#e4e4e4" stroke-width="1.600"/></svg>
<div class="t b" style="left:1551px;top:258px;color:#d4d4d4;font-size:12.200px" id="i_gm">Game Manager (Script)</div>
<svg style="left:1862px;top:261px" width="10" height="10" viewBox="0 0 11 11"><circle cx="5.500" cy="5.500" r="5.500" fill="#d0d0d0"/><path d="M3.800 4.200a1.700 1.700 0 1 1 2.600 1.500c-.6 .4-.9 .7-.9 1.300" fill="none" stroke="#3e3e3e" stroke-width="1.400"/><circle cx="5.500" cy="8.700" r=".9" fill="#3e3e3e"/></svg>
<svg style="left:1882px;top:261px" width="10" height="10" viewBox="0 0 12 11"><path d="M0 2.500h6.500M9.500 2.500H12M8 .5v4M0 8.500h2.500M5.500 8.500H12M4 6.500v4" fill="none" stroke="#d0d0d0" stroke-width="1.400"/></svg>
<svg style="left:1905px;top:261px" width="4" height="10" viewBox="0 0 4 11"><path d="M.8 .1h2.400v2.500H.8zM.8 3.900h2.400v2.500H.8zM.8 7.700h2.400v2.500H.8z" fill="#d0d0d0"/></svg>
<!-- script row -->
<div class="t" style="left:1510px;top:281px;color:#7e7e7e" id="i_script">Script</div>
<div class="a" style="left:1665px;top:280px;width:251px;height:18px;background:#303030;border:1px solid #2a2a2a;border-radius:3px"></div>
<svg style="left:1669px;top:284px" width="9" height="10" viewBox="0 0 9 11"><path d="M0 .6A.6 .6 0 0 1 .6 0H6.300L9 2.700v7.700a.6 .6 0 0 1-.6 .6H.6a.6 .6 0 0 1-.6-.6z" fill="#8c8c88"/><path d="M3.300 3 2.700 8.500M6 3 5.400 8.500M1.600 4.700h5.800M1.300 7h5.800" stroke="#3f6a42" stroke-width="1" fill="none"/></svg>
<div class="t" style="left:1682px;top:281px;color:#7e7e7e" id="i_gmref">GameManager</div>
<div class="a" style="left:1897px;top:281px;width:18px;height:16px;background:#363636;border-radius:0 3px 3px 0"></div>
<svg style="left:1901px;top:284px" width="10" height="10" viewBox="0 0 12 12"><circle cx="6" cy="6" r="5.200" fill="none" stroke="#9a9a9a" stroke-width="1"/><circle cx="6" cy="6" r="1.700" fill="#9a9a9a"/></svg>
<div class="a" style="left:1491px;top:306px;width:429px;height:1px;background:#1a1a1a"></div>
<!-- add component -->
<div class="a" style="left:1592px;top:316px;width:228px;height:22px;background:#585858;border-bottom:1px solid #2c2c2c;border-radius:3px;box-shadow:0 0 0 .5px #303030"></div>
<div class="t" style="left:1660px;top:318px;color:#e0e0e0" id="i_add">Add Component</div>

<!-- STATUS -->
<svg style="left:3px;top:1013px" width="14" height="16" viewBox="0 0 26 29"><path d="M12.500 0a12.500 12.500 0 1 0 6.300 23.300l6.200 4.700-2-8.300A12.500 12.500 0 0 0 12.500 0z" fill="#e8e8e8"/><rect x="11" y="5.500" width="3" height="10" rx="1" fill="#141414"/><circle cx="12.500" cy="19" r="1.900" fill="#141414"/></svg>
<div class="t" style="left:20px;top:1013px;color:#bdbdbd" id="s_hw">Hello World!</div>
<div class="a" style="left:1842px;top:1014px;width:1px;height:16px;background:#232323"></div>
<div class="a" style="left:1867px;top:1014px;width:1px;height:16px;background:#232323"></div>
<div class="a" style="left:1893px;top:1014px;width:1px;height:16px;background:#232323"></div>
<svg style="left:1847px;top:1015px" width="15" height="15" viewBox="0 0 15 15"><ellipse cx="7.500" cy="8.800" rx="4.600" ry="5.200" fill="#c4c4c4"/><circle cx="7.500" cy="3.500" r="2.400" fill="#c4c4c4"/><path d="M3.500 6 1.200 4M11.500 6l2.300-2M3 9.300H.5M12 9.300h2.500M3.800 12.500l-2 2M11.200 12.500l2 2" stroke="#c4c4c4" stroke-width="1.250"/><path d="M1.300 0 14.800 14.500" stroke="#141414" stroke-width="2.400"/><path d="M.5 .5 14 14" stroke="#c4c4c4" stroke-width="1.100"/></svg>
<svg style="left:1873px;top:1015px" width="15" height="15" viewBox="0 0 15 15"><ellipse cx="7" cy="3.200" rx="5.500" ry="2.500" fill="#c4c4c4"/><path d="M1.500 5.200c0 1.400 2.500 2.500 5.500 2.500s5.500-1.100 5.500-2.500v2.400c0 1.400-2.500 2.500-5.500 2.500S1.500 9 1.500 7.600zM1.500 9.400c0 1.400 2.500 2.500 5.500 2.500s5.500-1.100 5.500-2.500v2.200c0 1.400-2.500 2.500-5.500 2.500s-5.500-1.100-5.500-2.500z" fill="#c4c4c4"/><path d="M1 0 14.500 14.500" stroke="#141414" stroke-width="2.600"/><path d="M.5 .5 14 14" stroke="#c4c4c4" stroke-width="1.100"/></svg>
<svg style="left:1899px;top:1015px" width="15" height="15" viewBox="0 0 15 15"><circle cx="7.500" cy="7.500" r="6.700" fill="none" stroke="#c4c4c4" stroke-width="1.100"/><path d="M4.200 7.500 6.700 10 11 5" fill="none" stroke="#c4c4c4" stroke-width="1.700"/></svg>

<!-- OVERLAY -->
<svg style="left:0;top:0" width="1920" height="1032" viewBox="0 0 1920 1032"><rect x="1.900" y="76.050" width="248.400" height="94.850" rx="5.200" fill="none" stroke="#ff0000" stroke-width="4.500"/><rect x="907.250" y="42" width="44.500" height="37.150" rx="5" fill="none" stroke="#ff0000" stroke-width="4.200"/></svg>

</div>
</body>
</html>
